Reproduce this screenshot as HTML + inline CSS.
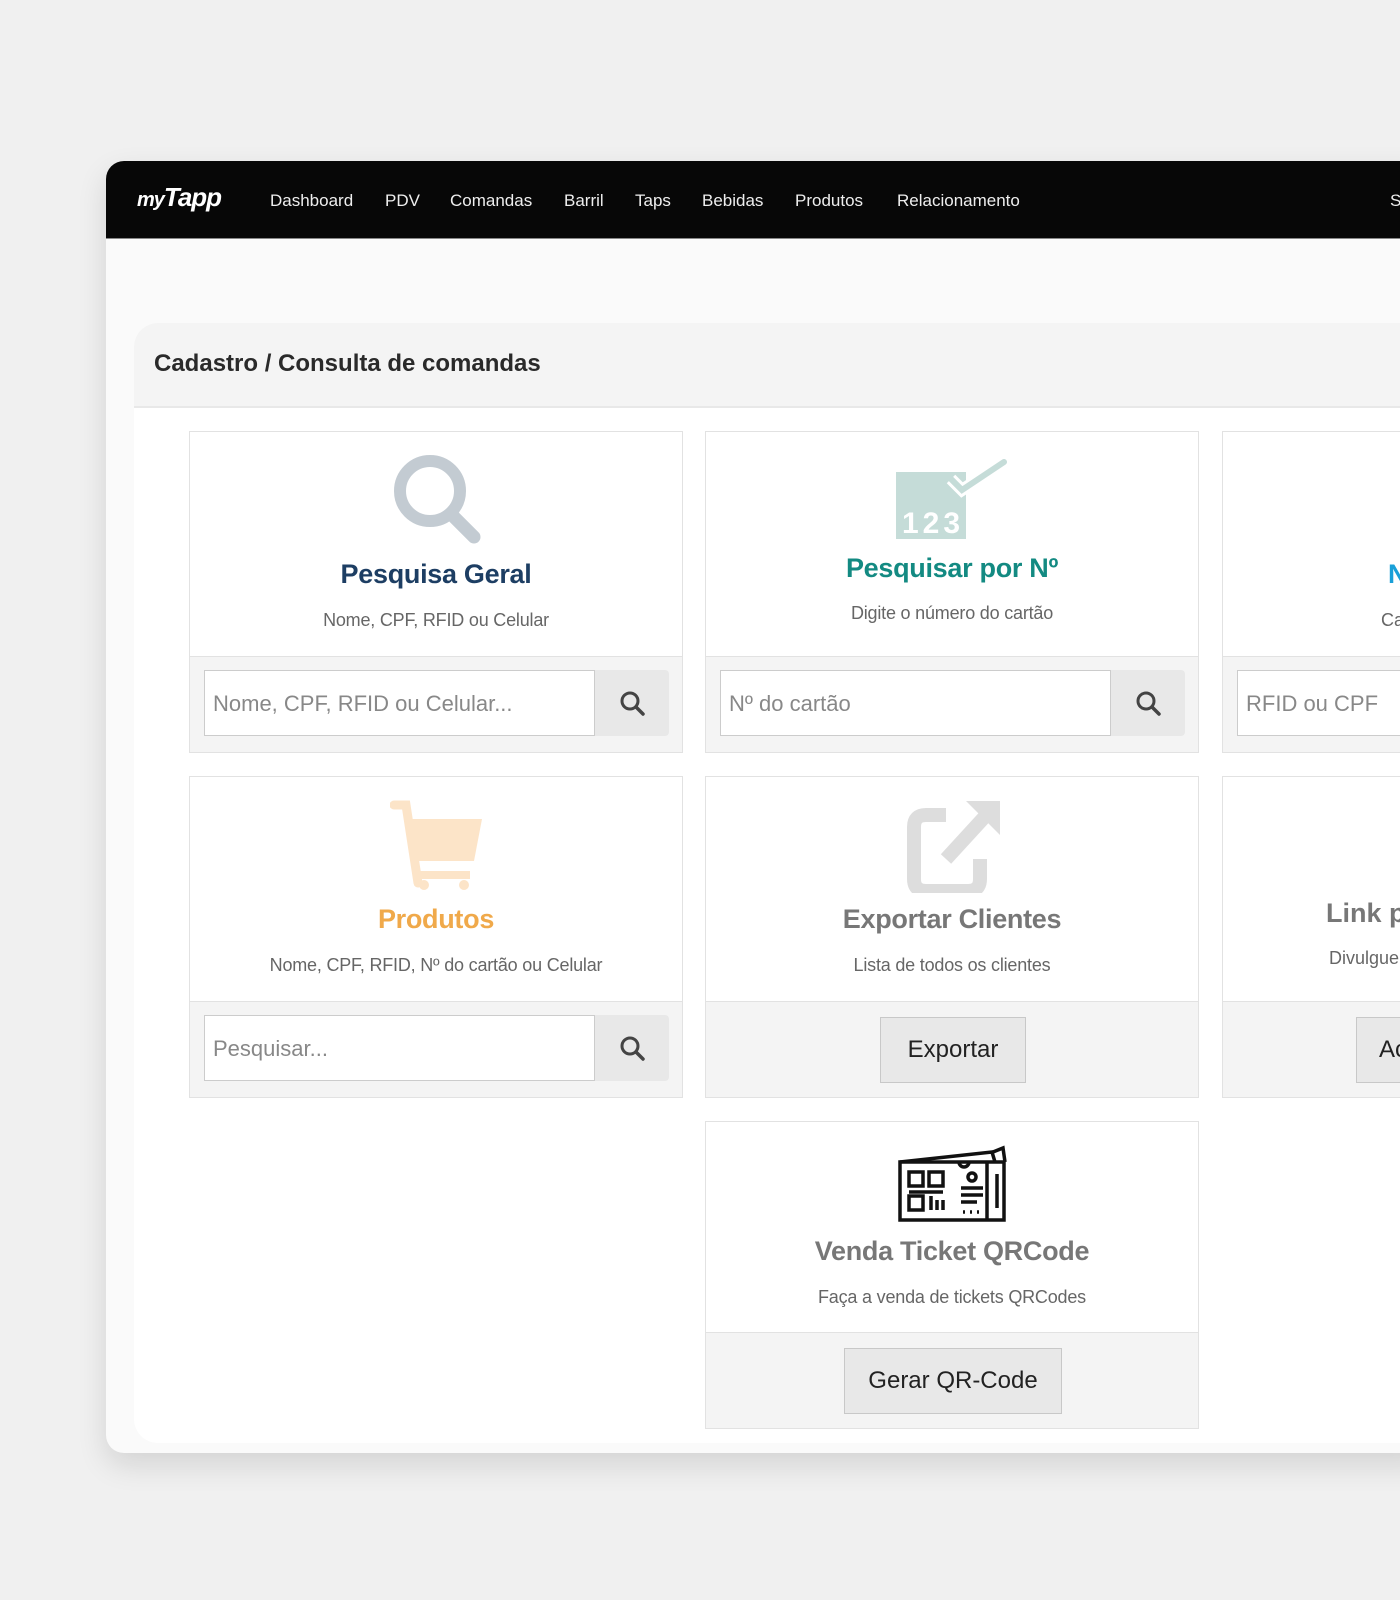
<!DOCTYPE html>
<html><head><meta charset="utf-8"><style>
*{margin:0;padding:0;box-sizing:border-box}
body{width:1400px;height:1600px;background:#f0f0f0;position:relative;overflow:hidden;font-family:"Liberation Sans",sans-serif}
.a{position:absolute}
.win{left:106px;top:161px;width:1320px;height:1292px;background:#fafafa;border-radius:18px 0 0 18px;box-shadow:0 12px 30px rgba(0,0,0,.12);overflow:hidden}
.nav{left:106px;top:161px;width:1320px;height:78px;background:#070707;border-radius:18px 0 0 0;border-bottom:1px solid #888}
.nv{color:#eee;font-size:17px;top:191px}
.panel{left:134px;top:323px;width:1300px;height:1120px;background:#fff;border-radius:24px 0 0 24px;overflow:hidden}
.ph{left:134px;top:323px;width:1300px;height:85px;background:#f4f4f4;border-bottom:2px solid #e8e8e8;border-radius:24px 0 0 0}
.card{background:#fff;border:1px solid #e2e2e2}
.ft{position:absolute;left:0;right:0;bottom:0;background:#f4f4f4;border-top:1px solid #e2e2e2}
.t{position:absolute;left:0;right:0;text-align:center;font-weight:bold;font-size:27px;letter-spacing:-0.3px}
.s{position:absolute;left:0;right:0;text-align:center;font-size:18px;color:#666;letter-spacing:-0.2px}
.inp{position:absolute;left:14px;top:13px;width:391px;height:66px;background:#fff;border:1px solid #ccc;font-size:22px;color:#888;padding:20px 8px;white-space:nowrap;overflow:hidden}
.sb{position:absolute;left:405px;top:13px;width:74px;height:66px;background:#e8e8e8;border-radius:0 4px 4px 0}
.btn{position:absolute;top:15px;height:66px;background:#e8e8e8;border:1px solid #c8c8c8;font-size:24px;color:#222;text-align:center;line-height:64px}
</style></head><body>
<div class="a win"></div>
<div class="a nav"></div>
<div class="a" style="left:137px;top:182px;color:#fff;font-size:26px;font-weight:bold;font-style:italic;letter-spacing:-1px"><span style="font-size:20px">my</span>Tapp</div>
<div class="a nv" style="left:270px">Dashboard</div>
<div class="a nv" style="left:385px">PDV</div>
<div class="a nv" style="left:450px">Comandas</div>
<div class="a nv" style="left:564px">Barril</div>
<div class="a nv" style="left:635px">Taps</div>
<div class="a nv" style="left:702px">Bebidas</div>
<div class="a nv" style="left:795px">Produtos</div>
<div class="a nv" style="left:897px">Relacionamento</div>
<div class="a nv" style="left:1390px">S</div>
<div class="a panel"></div>
<div class="a ph"></div>
<div class="a" style="left:154px;top:350px;font-size:24px;font-weight:bold;color:#2a2a2a">Cadastro / Consulta de comandas</div>

<!-- row1 -->
<div class="a card" style="left:189px;top:431px;width:494px;height:322px">
 <svg class="a" style="left:200px;top:21px" width="96" height="96" viewBox="0 0 96 96"><circle cx="40" cy="38" r="30" fill="none" stroke="#c3cbd2" stroke-width="12"/><line x1="62" y1="62" x2="84" y2="84" stroke="#c3cbd2" stroke-width="13" stroke-linecap="round"/></svg>
 <div class="t" style="top:127px;color:#1d3e63">Pesquisa Geral</div>
 <div class="s" style="top:178px">Nome, CPF, RFID ou Celular</div>
 <div class="ft" style="height:96px"><div class="inp">Nome, CPF, RFID ou Celular...</div><div class="sb"><svg class="a" style="left:24px;top:20px" width="26" height="26" viewBox="0 0 26 26"><circle cx="11" cy="11" r="8" fill="none" stroke="#444" stroke-width="3"/><line x1="17" y1="17" x2="24" y2="24" stroke="#444" stroke-width="3.5" stroke-linecap="round"/></svg></div></div>
</div>
<div class="a card" style="left:705px;top:431px;width:494px;height:322px">
 <svg class="a" style="left:190px;top:27px" width="115" height="82" viewBox="0 0 115 82"><rect x="0" y="13" width="70" height="67" fill="#c5dcd8"/><text x="6" y="74" font-family="Liberation Sans" font-weight="bold" font-size="30" fill="#fff" letter-spacing="4">123</text><path d="M55 20 L66 31 L108 3" fill="none" stroke="#fff" stroke-width="12"/><path d="M55 20 L66 31 L108 3" fill="none" stroke="#c5dcd8" stroke-width="6" stroke-linecap="round"/></svg>
 <div class="t" style="top:121px;color:#138a82">Pesquisar por Nº</div>
 <div class="s" style="top:171px">Digite o número do cartão</div>
 <div class="ft" style="height:96px"><div class="inp">Nº do cartão</div><div class="sb"><svg class="a" style="left:24px;top:20px" width="26" height="26" viewBox="0 0 26 26"><circle cx="11" cy="11" r="8" fill="none" stroke="#444" stroke-width="3"/><line x1="17" y1="17" x2="24" y2="24" stroke="#444" stroke-width="3.5" stroke-linecap="round"/></svg></div></div>
</div>
<div class="a card" style="left:1222px;top:431px;width:300px;height:322px">
 <div class="a" style="left:165px;top:127px;font-size:27px;font-weight:bold;color:#1aa0d8">N</div>
 <div class="a" style="left:158px;top:178px;font-size:18px;color:#666">Ca</div>
 <div class="ft" style="height:96px"><div class="inp" style="width:300px">RFID ou CPF</div></div>
</div>

<!-- row2 -->
<div class="a card" style="left:189px;top:776px;width:494px;height:322px">
 <svg class="a" style="left:200px;top:22px" width="92" height="92" viewBox="0 0 92 92"><path d="M4 6 H16 L28 84" fill="none" stroke="#fce4c8" stroke-width="9" stroke-linecap="round"/><path d="M20 20 H92 L84 62 H28 Z" fill="#fce4c8"/><path d="M26 76 H80" stroke="#fce4c8" stroke-width="8"/><circle cx="34" cy="86" r="5" fill="#fce4c8"/><circle cx="74" cy="86" r="5" fill="#fce4c8"/></svg>
 <div class="t" style="top:127px;color:#f0a94a">Produtos</div>
 <div class="s" style="top:178px">Nome, CPF, RFID, Nº do cartão ou Celular</div>
 <div class="ft" style="height:96px"><div class="inp">Pesquisar...</div><div class="sb"><svg class="a" style="left:24px;top:20px" width="26" height="26" viewBox="0 0 26 26"><circle cx="11" cy="11" r="8" fill="none" stroke="#444" stroke-width="3"/><line x1="17" y1="17" x2="24" y2="24" stroke="#444" stroke-width="3.5" stroke-linecap="round"/></svg></div></div>
</div>
<div class="a card" style="left:705px;top:776px;width:494px;height:322px">
 <svg class="a" style="left:200px;top:22px" width="94" height="94" viewBox="0 0 94 94"><path d="M40 16 H20 Q8 16 8 28 V80 Q8 92 20 92 H62 Q74 92 74 80 V60" fill="none" stroke="#ddd" stroke-width="14"/><path d="M60 2 H94 V36 Z" fill="#ddd"/><path d="M84 12 L40 60" stroke="#ddd" stroke-width="14"/></svg>
 <div class="t" style="top:127px;color:#777">Exportar Clientes</div>
 <div class="s" style="top:178px">Lista de todos os clientes</div>
 <div class="ft" style="height:96px"><div class="btn" style="left:174px;width:146px">Exportar</div></div>
</div>
<div class="a card" style="left:1222px;top:776px;width:300px;height:322px">
 <div class="a" style="left:103px;top:121px;font-size:27px;font-weight:bold;color:#777">Link p</div>
 <div class="a" style="left:106px;top:171px;font-size:18px;color:#666">Divulgue</div>
 <div class="ft" style="height:96px"><div class="btn" style="left:133px;width:150px;text-align:left;padding-left:22px">Ac</div></div>
</div>

<!-- row3 -->
<div class="a card" style="left:705px;top:1121px;width:494px;height:308px">
 <svg class="a" style="left:191px;top:22px" width="115" height="80" viewBox="0 0 115 80" fill="none" stroke="#111" stroke-width="3.5"><path d="M3 18 L95 8 L98 18"/><rect x="3" y="18" width="104" height="58"/><path d="M90 18 L90 76 M100 30 V64"/><path d="M62 18 a5 5 0 0 0 10 0"/><rect x="12" y="28" width="14" height="14"/><rect x="32" y="28" width="14" height="14"/><rect x="12" y="52" width="14" height="14"/><path d="M12 48 H46 M34 52 V66 M40 56 V66 M46 56 V66"/><circle cx="75" cy="33" r="4"/><path d="M64 44 H86 M64 51 H86 M64 58 H80 M66 68 H68 M73 68 H75 M80 68 H82"/><path d="M96 8 L106 4 L108 18"/></svg>
 <div class="t" style="top:114px;color:#777">Venda Ticket QRCode</div>
 <div class="s" style="top:165px">Faça a venda de tickets QRCodes</div>
 <div class="ft" style="height:96px"><div class="btn" style="left:138px;width:218px">Gerar QR-Code</div></div>
</div>
</body></html>
